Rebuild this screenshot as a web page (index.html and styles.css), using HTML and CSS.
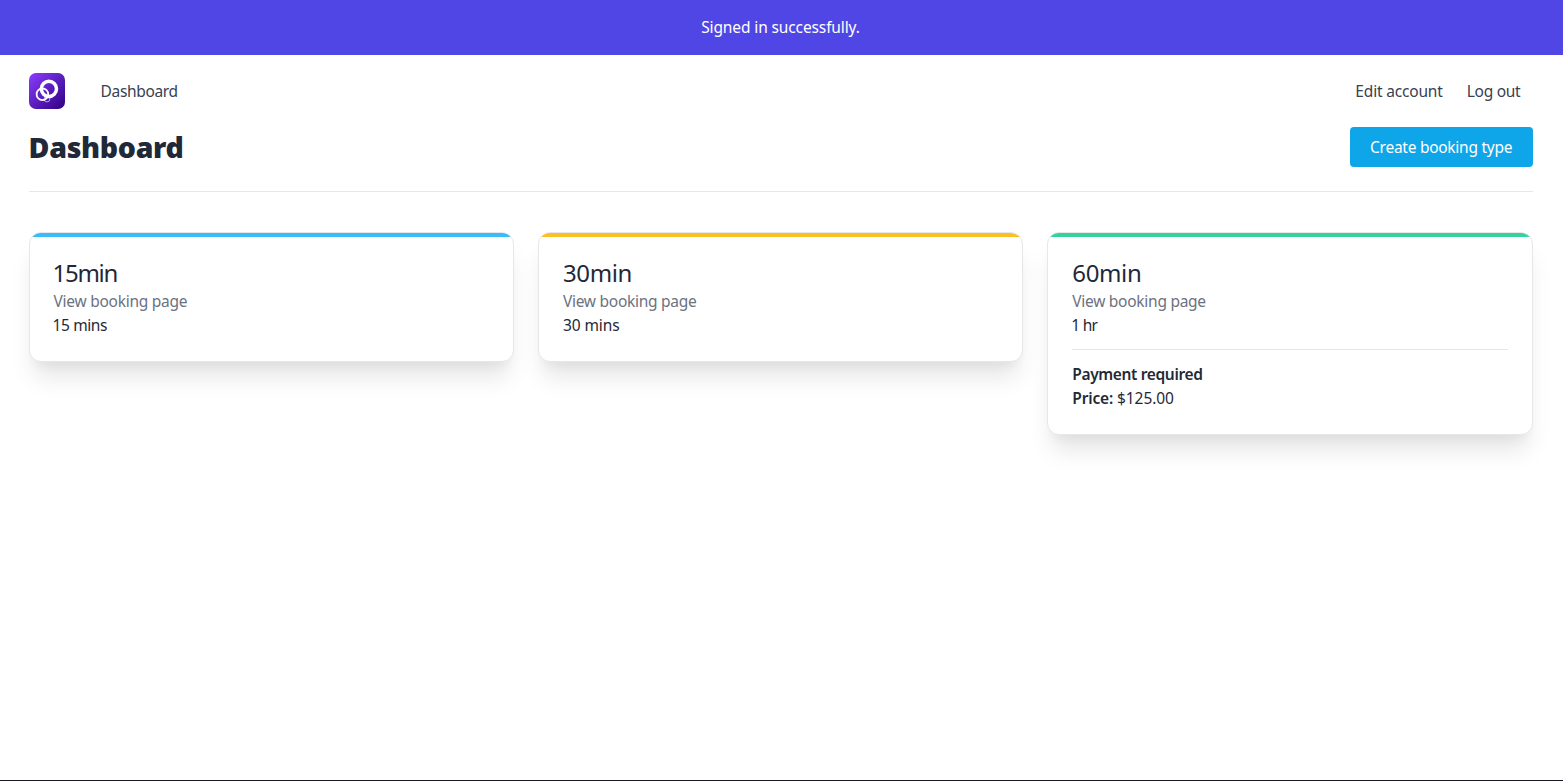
FILE: index.html
```html
<!DOCTYPE html>
<html lang="en">
<head>
<meta charset="utf-8">
<title>Dashboard</title>
<link rel="stylesheet" href="styles.css">
</head>
<body>
<div class="notice"><span class="notice-text">Signed in successfully.</span></div>
<div class="container">
  <nav class="nav">
    <a class="logo" aria-label="Home">
      <svg width="36" height="36" viewBox="0 0 36 36">
        <defs><linearGradient id="g" x1="0" y1="0" x2="1" y2="1"><stop offset="0" stop-color="#8b3dff"/><stop offset="1" stop-color="#2e0080"/></linearGradient></defs>
        <rect width="36" height="36" rx="7" fill="url(#g)"/>
        <g fill="none" stroke="#fff">
          <circle cx="19.9" cy="15.8" r="7.6" stroke-width="3.5"/>
          <circle cx="13.4" cy="21.3" r="5.8" stroke-width="1.8"/>
          <circle cx="18" cy="26" r="2.9" stroke-width=".8" stroke-opacity=".75"/>
        </g>
      </svg>
    </a>
    <a class="link home">Dashboard</a>
    <div class="account">
      <a class="link edit">Edit account</a>
      <a class="link">Log out</a>
    </div>
  </nav>
  <header class="header">
    <h1 class="title">Dashboard</h1>
    <a class="button">Create booking type</a>
  </header>
  <main class="cards">
    <section class="card">
      <div class="stripe sky"></div>
      <div class="body">
        <h2 class="name narrow">15min</h2>
        <p><a class="view">View booking page</a></p>
        <p class="duration quarter">15 mins</p>
      </div>
    </section>
    <section class="card">
      <div class="stripe amber"></div>
      <div class="body">
        <h2 class="name">30min</h2>
        <p><a class="view">View booking page</a></p>
        <p class="duration">30 mins</p>
      </div>
    </section>
    <section class="card">
      <div class="stripe green"></div>
      <div class="body">
        <h2 class="name">60min</h2>
        <p><a class="view">View booking page</a></p>
        <p class="duration hour">1 hr</p>
        <div class="payment">
          <p class="strong">Payment required</p>
          <p class="amount"><span class="strong label">Price:</span> <span class="price">$125.00</span></p>
        </div>
      </div>
    </section>
  </main>
</div>
<div class="edge"></div>
</body>
</html>
```
FILE: styles.css
```css
* { box-sizing: border-box; }
body {
  margin: 0;
  min-height: 781px;
  display: flex;
  flex-direction: column;
  background: #fff;
  color: #1f2937;
  font: 15.5px/24px "Noto Sans", sans-serif;
  letter-spacing: -0.27px;
}
h1, h2, p { margin: 0; }
.notice {
  height: 55px;
  padding: 0 2px 1px 0;
  display: flex;
  align-items: center;
  justify-content: center;
  background: #4f46e5;
  color: #fff;
  letter-spacing: -0.12px;
}
.container { padding: 0 30.4px 0 28.6px; }
.nav {
  height: 72px;
  display: flex;
  align-items: center;
}
.logo { display: flex; margin-right: 36px; }
.link { color: #374151; }
.home { letter-spacing: -0.35px; }
.edit { letter-spacing: -0.18px; }
.account { display: flex; gap: 24px; margin: 0 12.2px 0 auto; }
.header {
  height: 65px;
  display: flex;
  align-items: flex-start;
  justify-content: space-between;
  border-bottom: 1px solid #e5e7eb;
}
.title { font-size: 28.5px; line-height: 40px; font-weight: 900; letter-spacing: -0.32px; }
.button {
  width: 183px;
  height: 40px;
  line-height: 40px;
  text-align: center;
  border-radius: 4px;
  background: #0ea5e9;
  color: #fff;
}
.cards {
  margin-top: 40px;
  display: grid;
  grid-template-columns: repeat(3, 1fr);
  gap: 24px;
  align-items: start;
}
.card {
  overflow: hidden;
  border: 1px solid #e5e7eb;
  border-radius: 12px;
  background: #fff;
  box-shadow: 0 20px 25px -5px rgba(0, 0, 0, .1), 0 10px 10px -5px rgba(0, 0, 0, .04);
}
.stripe { height: 4px; }
.sky { background: #38bdf8; }
.amber { background: #fbbf24; }
.green { background: #34d399; }
.body { padding: 20px 24px 24px; }
.name { font-size: 24px; line-height: 32px; font-weight: 400; letter-spacing: -0.35px; }
.narrow { margin-left: -1px; letter-spacing: -1.3px; }
.view { color: #6b7280; }
.duration, .amount { letter-spacing: -0.1px; }
.quarter { margin-left: -1px; letter-spacing: -0.4px; }
.hour { margin-left: -1px; letter-spacing: -0.75px; }
.payment { margin-top: 12px; padding-top: 12px; border-top: 1px solid #e5e7eb; }
.strong { font-weight: 600; letter-spacing: -0.35px; }
.label { letter-spacing: -0.15px; }
.edge { height: 1px; margin-top: auto; background: #181820; }
```
